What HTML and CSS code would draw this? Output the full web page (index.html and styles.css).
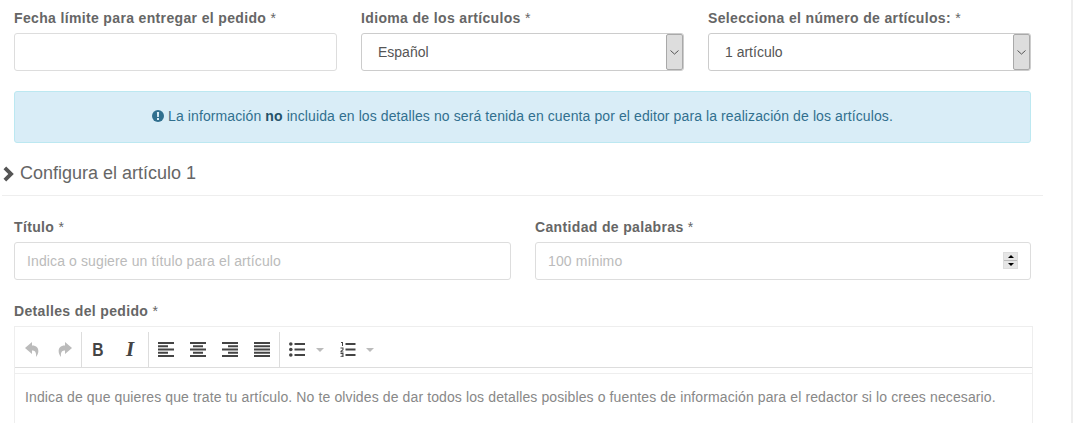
FILE: index.html
```html
<!DOCTYPE html>
<html lang="es">
<head>
<meta charset="utf-8">
<title>Pedido</title>
<link rel="stylesheet" href="styles.css">
</head>
<body>
<main class="page">
  <div class="row three">
    <div class="field">
      <label class="label">Fecha límite para entregar el pedido <span class="req">*</span></label>
      <input class="control" type="text">
    </div>
    <div class="field">
      <label class="label">Idioma de los artículos <span class="req">*</span></label>
      <div class="select">
        <span class="select-value">Español</span>
        <span class="select-arrow"><svg width="9" height="5" viewBox="0 0 9 5"><path d="M.5.5l4 3.600 4-3.600" fill="none" stroke="#555" stroke-width="1"/></svg></span>
      </div>
    </div>
    <div class="field">
      <label class="label">Selecciona el número de artículos: <span class="req">*</span></label>
      <div class="select">
        <span class="select-value">1 artículo</span>
        <span class="select-arrow"><svg width="9" height="5" viewBox="0 0 9 5"><path d="M.5.5l4 3.600 4-3.600" fill="none" stroke="#555" stroke-width="1"/></svg></span>
      </div>
    </div>
  </div>

  <div class="alert">
    <svg class="alert-icon" width="12" height="12" viewBox="0 0 12 12"><circle cx="6" cy="6" r="6" fill="#31708f"/><path d="M4.900 2h2.200l-.25 5H5.150zM5 8h2v2H5z" fill="#d9edf7"/></svg>
    La información <strong>no</strong> incluida en los detalles no será tenida en cuenta por el editor para la realización de los artículos.
  </div>

  <h2 class="heading">
    <svg class="chevron" width="12" height="16" viewBox="0 0 12 16"><path d="M3.200.5l7.600 7.500-7.600 7.500L.5 12.800 5.300 8 .5 3.200z" fill="#555"/></svg>
    Configura el artículo 1
  </h2>

  <div class="row two">
    <div class="field">
      <label class="label">Título <span class="req">*</span></label>
      <input class="control" type="text" placeholder="Indica o sugiere un título para el artículo">
    </div>
    <div class="field">
      <label class="label">Cantidad de palabras <span class="req">*</span></label>
      <div class="number">
        <input class="control" type="text" placeholder="100 mínimo">
        <span class="spinner">
          <span class="spin"><i class="tri up"></i></span>
          <span class="spin"><i class="tri down"></i></span>
        </span>
      </div>
    </div>
  </div>

  <div class="details">
    <label class="label">Detalles del pedido <span class="req">*</span></label>
    <div class="editor">
      <div class="toolbar">
        <div class="group">
          <span class="btn"><svg width="15" height="15" viewBox="0 0 15 15"><path d="M7 0L0 6l7 6V8.500c3 0 4.500 1.500 4 6.500 3-3 4.500-11.500-4-11.500z" fill="#bbb"/></svg></span>
          <span class="btn"><svg width="15" height="15" viewBox="0 0 15 15"><path d="M8 0l7 6-7 6V8.500c-3 0-4.500 1.500-4 6.500C1 12-.5 3.500 8 3.500z" fill="#bbb"/></svg></span>
        </div>
        <div class="group">
          <span class="btn glyph bold">B</span>
          <span class="btn glyph italic">I</span>
        </div>
        <div class="group">
          <span class="btn"><svg width="16" height="15" viewBox="0 0 16 15"><path d="M0 0h16v2H0zM0 3.250h10v2H0zM0 6.500h16v2H0zM0 9.750h10v2H0zM0 13h16v2H0z" fill="#444"/></svg></span>
          <span class="btn"><svg width="16" height="15" viewBox="0 0 16 15"><path d="M0 0h16v2H0zM3 3.250h10v2H3zM0 6.500h16v2H0zM3 9.750h10v2H3zM0 13h16v2H0z" fill="#444"/></svg></span>
          <span class="btn"><svg width="16" height="15" viewBox="0 0 16 15"><path d="M0 0h16v2H0zM6 3.250h10v2H6zM0 6.500h16v2H0zM6 9.750h10v2H6zM0 13h16v2H0z" fill="#444"/></svg></span>
          <span class="btn"><svg width="16" height="15" viewBox="0 0 16 15"><path d="M0 0h16v2H0zM0 3.250h16v2H0zM0 6.500h16v2H0zM0 9.750h16v2H0zM0 13h16v2H0z" fill="#444"/></svg></span>
        </div>
        <div class="group lists">
          <span class="btn"><svg width="16" height="15" viewBox="0 0 16 15"><circle cx="1.800" cy="2" r="1.800" fill="#444"/><circle cx="1.800" cy="7.500" r="1.800" fill="#444"/><circle cx="1.800" cy="13" r="1.800" fill="#444"/><path d="M5.500 1h10.500v2H5.500zM5.500 6.500h10.500v2H5.500zM5.500 12h10.500v2H5.500z" fill="#444"/></svg></span>
          <span class="caret"></span>
          <span class="btn"><svg width="16" height="15" viewBox="0 0 16 15"><path d="M1 0h2v4H2V1H1zM.5 5.500h3V8l-2 1.500h2v1h-3V9l2-1.500V6.500h-2zM.5 11h3v4h-3v-.8h2v-.8h-1v-.7h1v-.8h-2z" fill="#444"/><path d="M5.500 1h10v2h-10zM5.500 6.500h10v2h-10zM5.500 12h10v2h-10z" fill="#444"/></svg></span>
          <span class="caret"></span>
        </div>
      </div>
      <div class="editor-body">Indica de que quieres que trate tu artículo. No te olvides de dar todos los detalles posibles o fuentes de información para el redactor si lo crees necesario.</div>
    </div>
  </div>
</main>
</body>
</html>
```

FILE: styles.css
```css
* { box-sizing: border-box; }

html, body { height: 423px; overflow: hidden; }

body {
  margin: 0;
  background: #fff;
  font-family: "Liberation Sans", Arial, sans-serif;
  font-size: 14px;
  color: #555;
  border-right: 2px solid #eee;
}

.page { padding: 9px 0 0 14px; width: 1043px; }

.row { display: grid; column-gap: 24px; width: 1017px; }
.three { grid-template-columns: repeat(3, 323px); }
.two { grid-template-columns: 497px 496px; }

.label {
  display: block;
  height: 18px;
  margin-bottom: 6px;
  font-size: 14px;
  line-height: 18px;
  font-weight: bold;
  letter-spacing: .35px;
  color: #666;
}
.req { font-weight: normal; }

.control {
  display: block;
  width: 100%;
  height: 38px;
  padding: 0 12px;
  border: 1px solid #ddd;
  border-radius: 3px;
  background: #fff;
  font: 14px "Liberation Sans", Arial, sans-serif;
  letter-spacing: .115px;
  color: #555;
  outline: none;
}
.control::placeholder { color: #bbb; opacity: 1; }

.select {
  display: flex;
  align-items: center;
  justify-content: space-between;
  height: 38px;
  border: 1px solid #ccc;
  border-radius: 3px;
}
.select-value { padding-left: 16px; color: #555; }
.select-arrow {
  display: flex;
  align-items: center;
  justify-content: center;
  width: 17px;
  height: 36px;
  background: #ddd;
  border: 1px solid #a9a9a9;
  border-radius: 2px;
}

.alert {
  width: 1017px;
  height: 52px;
  margin-top: 20px;
  border: 1px solid #bce8f1;
  border-radius: 3px;
  background: #d9edf7;
  color: #31708f;
  text-align: center;
  line-height: 49px;
  letter-spacing: .1px;
  white-space: nowrap;
}
.alert strong { color: #245269; }
.alert-icon { vertical-align: -1px; }

.heading {
  display: flex;
  align-items: center;
  gap: 5px;
  height: 44px;
  margin: 9px 0 0 -12px;
  padding: 0 0 0 1px;
  border-bottom: 1px solid #eee;
  font-size: 18px;
  font-weight: normal;
  color: #666;
  width: 1041px;
}
.chevron { flex: none; }

.heading + .row { margin-top: 22px; }

.number { position: relative; }
.spinner {
  position: absolute;
  top: 10px;
  right: 13px;
  display: flex;
  flex-direction: column;
  gap: 1px;
  width: 15px;
  height: 17px;
  background: #bbb;
  border: 1px solid #ddd;
}
.spin { flex: 1; display: flex; align-items: center; justify-content: center; background: #e6e6e6; }
.tri { width: 0; height: 0; border-left: 3px solid transparent; border-right: 3px solid transparent; }
.tri.up { border-bottom: 3px solid #000; }
.tri.down { border-top: 3px solid #000; }

.details { margin-top: 22px; }

.editor {
  width: 1019px;
  height: 97px;
  border: 1px solid #eee;
  border-bottom: 0;
}

.toolbar {
  display: flex;
  height: 41px;
  margin: 0 0 5px;
  padding: 5px 0 0 1px;
  border-bottom: 1px solid #ddd;
}

.group { display: flex; align-items: center; border-right: 1px solid #ddd; }
.group:first-child { width: 66px; }
.group:nth-child(2) { width: 67px; }
.group:nth-child(3) { width: 131px; padding-left: 1px; }
.lists { border-right: 0; padding-left: 1px; }

.btn {
  display: flex;
  align-items: center;
  justify-content: center;
  width: 32px;
  height: 35px;
  flex: none;
}
.glyph { color: #444; }
.bold { font-weight: bold; font-size: 19px; transform: scaleX(.82); }
.italic { font-family: "Liberation Serif", serif; font-style: italic; font-weight: bold; font-size: 21px; }

.caret {
  width: 0;
  height: 0;
  margin: 0 9px 0 3px;
  border-left: 4px solid transparent;
  border-right: 4px solid transparent;
  border-top: 4px solid #bbb;
}
.lists .btn:nth-child(3) { width: 30px; }

.editor-body {
  height: 50px;
  padding: 14px 10px 0;
  border-top: 1px solid #eee;
  font-size: 14px;
  line-height: 18px;
  letter-spacing: .115px;
  color: #888;
  white-space: nowrap;
}
```
